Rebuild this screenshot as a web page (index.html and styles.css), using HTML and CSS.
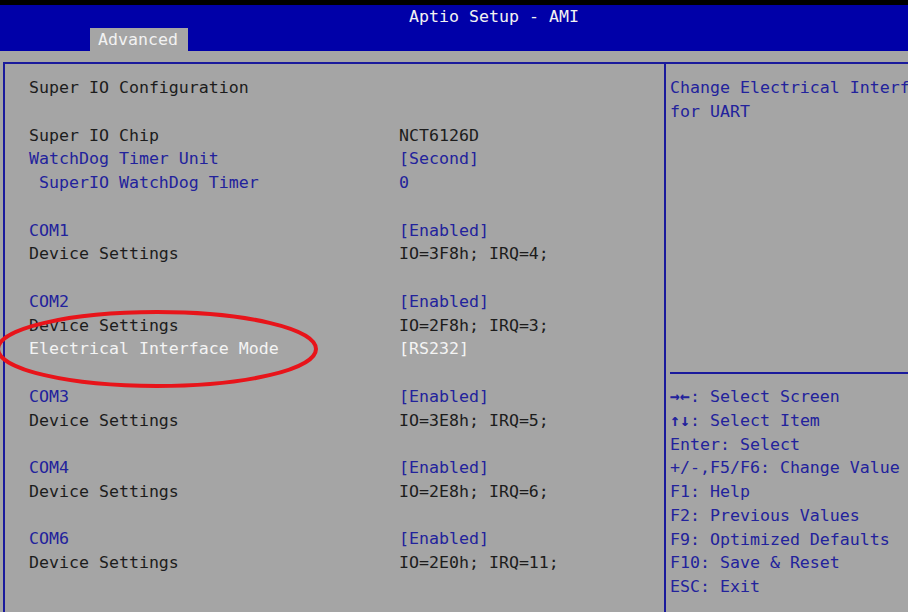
FILE: index.html
```html
<!DOCTYPE html>
<html lang="en">
<head>
    <meta charset="UTF-8">
    <meta name="viewport" content="width=device-width, initial-scale=1.0">
    <title>Aptio Setup - AMI</title>
    <link rel="stylesheet" href="styles.css">
</head>
<body>
    <div class="header">
        <div class="title">Aptio Setup - AMI</div>
        <div class="tabs">
            <div class="tab">Advanced</div>
        </div>
    </div>

    <div class="frame">
        <div class="main">
            <div class="row"><span class="dark">Super IO Configuration</span></div>
            <div class="row"></div>
            <div class="row dark"><span>Super IO Chip</span><span>NCT6126D</span></div>
            <div class="row blue"><span>WatchDog Timer Unit</span><span>[Second]</span></div>
            <div class="row blue"><span>&nbsp;SuperIO WatchDog Timer</span><span>0</span></div>
            <div class="row"></div>
            <div class="row blue"><span>COM1</span><span>[Enabled]</span></div>
            <div class="row dark"><span>Device Settings</span><span>IO=3F8h; IRQ=4;</span></div>
            <div class="row"></div>
            <div class="row blue"><span>COM2</span><span>[Enabled]</span></div>
            <div class="row dark"><span>Device Settings</span><span>IO=2F8h; IRQ=3;</span></div>
            <div class="row selected"><span>Electrical Interface Mode</span><span>[RS232]</span></div>
            <div class="row"></div>
            <div class="row blue"><span>COM3</span><span>[Enabled]</span></div>
            <div class="row dark"><span>Device Settings</span><span>IO=3E8h; IRQ=5;</span></div>
            <div class="row"></div>
            <div class="row blue"><span>COM4</span><span>[Enabled]</span></div>
            <div class="row dark"><span>Device Settings</span><span>IO=2E8h; IRQ=6;</span></div>
            <div class="row"></div>
            <div class="row blue"><span>COM6</span><span>[Enabled]</span></div>
            <div class="row dark"><span>Device Settings</span><span>IO=2E0h; IRQ=11;</span></div>
        </div>

        <div class="side">
            <div class="help">
                <div class="line">Change Electrical Interface Mode</div>
                <div class="line">for UART</div>
            </div>
            <div class="keys">
                <div class="line"><b>&rarr;&larr;</b>: Select Screen</div>
                <div class="line"><b>&uarr;&darr;</b>: Select Item</div>
                <div class="line">Enter: Select</div>
                <div class="line">+/-,F5/F6: Change Value</div>
                <div class="line">F1: Help</div>
                <div class="line">F2: Previous Values</div>
                <div class="line">F9: Optimized Defaults</div>
                <div class="line">F10: Save &amp; Reset</div>
                <div class="line">ESC: Exit</div>
            </div>
        </div>
    </div>

    <svg class="mark" width="908" height="612" viewBox="0 0 908 612">
        <ellipse cx="157" cy="349" rx="159" ry="37" fill="none" stroke="#e8141a" stroke-width="4"/>
    </svg>
</body>
</html>
```

FILE: styles.css
```css
body {
    margin: 0;
    background-color: #a5a5a5;
    font-family: "DejaVu Sans Mono", "Liberation Mono", monospace;
    font-size: 16.6px;
    color: #1c1c1c;
    overflow: hidden;
    height: 612px;
    position: relative;
}
.header {
    background-color: #0000a8;
    border-top: 5px solid #000;
    height: 46px;
    display: flex;
    flex-direction: column;
}
.title {
    color: #f2f2f2;
    text-align: center;
    padding-left: 80px;
    line-height: 23px;
}
.tabs {
    display: flex;
    padding-left: 90px;
}
.tab {
    background-color: #a5a5a5;
    color: #f2f2f2;
    height: 23px;
    line-height: 24px;
    padding: 0 10px 0 8px;
}
.frame {
    margin: 11px 0 0 3px;
    width: 990px;
    height: 560px;
    border-top: 2px solid #1a1a9c;
    border-left: 2px solid #1a1a9c;
    display: grid;
    grid-template-columns: 661px 1fr;
}
.main {
    padding: 12px 0 0 24px;
    border-right: 2px solid #1a1a9c;
}
.row {
    display: grid;
    grid-template-columns: 370px 1fr;
    height: 23.75px;
    line-height: 23.75px;
    white-space: pre;
}
.dark {
    color: #1c1c1c;
}
.blue {
    color: #22229c;
}
.selected {
    color: #f4f4f4;
}
.side {
    padding: 12px 0 0 4px;
    color: #22229c;
    white-space: nowrap;
    overflow: hidden;
}
.help {
    height: 296px;
    border-bottom: 2px solid #1a1a9c;
    margin-bottom: 11px;
}
.line {
    height: 23.75px;
    line-height: 23.75px;
}
.keys b {
    font-weight: bold;
}
.mark {
    position: absolute;
    left: 0;
    top: 0;
    pointer-events: none;
}
```
